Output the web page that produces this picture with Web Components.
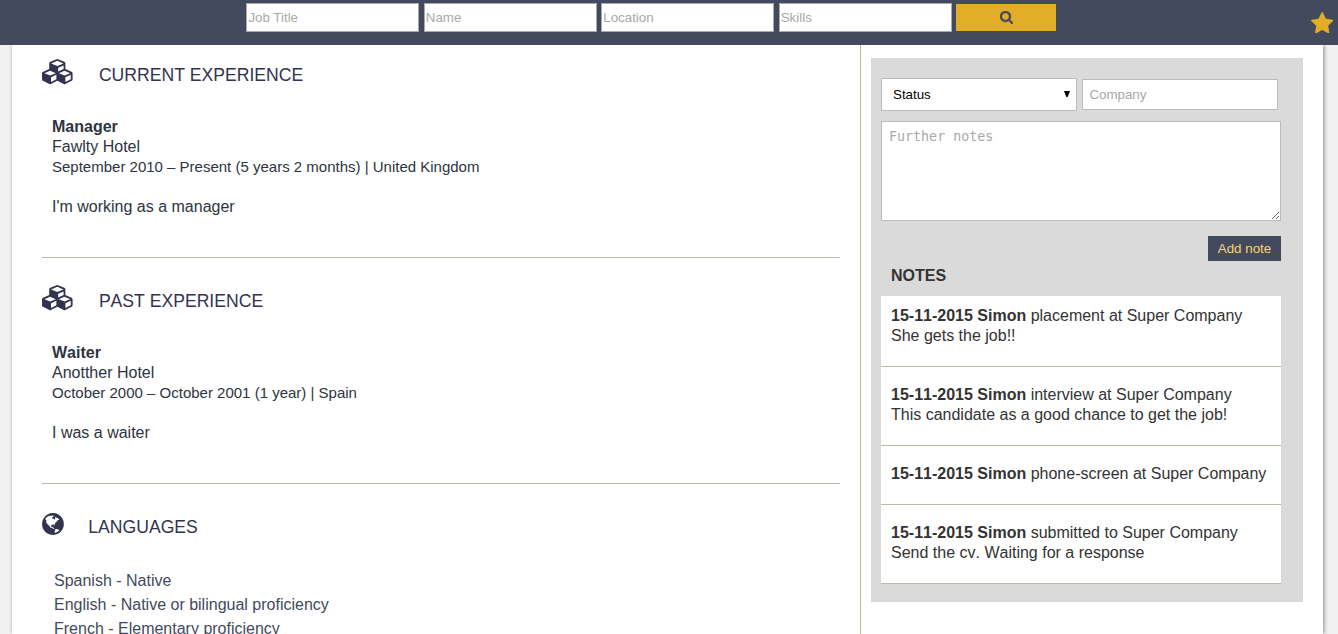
<!DOCTYPE html>
<html lang="en">
<head>
<meta charset="utf-8">
<title>Candidate profile</title>
<style>
html, body { margin: 0; height: 100%; overflow: hidden; }
body { background: #f1f1f1; font: 16px/20px "Liberation Sans", Arial, sans-serif; font-kerning: none; color: #333; }
</style>
</head>
<body>
<candidate-page></candidate-page>
<script>
const ICONS = {
  search: ['64 128 1664 1664', 'M1216 832q0-185-131.5-316.5t-316.5-131.5-316.5 131.5-131.5 316.5 131.5 316.5 316.5 131.5 316.5-131.5 131.5-316.5zm512 832q0 52-38 90t-90 38q-54 0-90-38l-343-342q-179 124-399 124-143 0-273.5-55.5t-225-150-150-225-55.5-273.5 55.5-273.5 150-225 225-150 273.5-55.5 273.5 55.5 225 150 150 225 55.5 273.5q0 220-124 399l343 343q37 37 37 90z'],
  star: ['64 32 1664 1587', 'M1728 647q0 22-26 48l-363 354 86 500q1 7 1 20 0 21-10.5 35.5t-30.5 14.5q-19 0-40-12l-449-236-449 236q-22 12-40 12-21 0-31.5-14.5t-10.5-35.5q0-6 2-20l86-500-364-354q-25-27-25-48 0-37 56-46l502-73 225-455q19-41 49-41t49 41l225 455 502 73q56 9 56 46z'],
  globe: ['128 128 1536 1536', 'M896 128q209 0 385.5 103t279.5 279.5 103 385.5-103 385.5-279.5 279.5-385.5 103-385.5-103-279.5-279.5-103-385.5 103-385.5 279.5-279.5 385.5-103zm274 521q-2 1-9.5 9.5t-13.5 9.5q2 0 4.5-5t5-11 3.5-7q6-7 22-15 14-6 52-12 34-8 51 11-2-2 9.5-13t14.5-12q3-2 15-4.5t15-7.5l2-22q-12 1-17.5-7t-6.5-21q0 2-6 8 0-7-4.5-8t-11.5 1-9 1q-10-3-15-7.5t-8-16.5-4-15q-2-5-9.5-11t-9.5-10q-1-2-2.5-5.5t-3-6.5-4-5.5-5.5-2.5-7 5-7.5 10-4.5 5q-3-2-6-1.5t-4.5 1-4.5 3-5 3.5q-3 2-8.5 3t-8.5 2q15-5-1-11-10-4-16-3 9-4 7.5-12t-8.5-14h5q-1-4-8.5-8.5t-17.5-8.5-13-6q-8-5-34-9.5t-33-.5q-5 6-4.5 10.5t4 14 3.5 12.5q1 6-5.5 13t-6.5 12q0 7 14 15.5t10 21.5q-3 8-16 16t-16 12q-5 8-1.5 18.5t10.5 16.5q2 2 1.5 4t-3.5 4.5-5.5 4-6.5 3.5l-3 2q-11 5-20.5-6t-13.5-26q-7-25-16-30-23-8-29 1-5-13-41-26-25-9-58-4 6-1 0-15-7-15-19-12 3-6 4-17.5t1-13.5q3-13 12-23 1-1 7-8.5t9.5-13.5.5-6q35 4 50-11 5-5 11.5-17t10.5-17q9-6 14-5.5t14.5 5.5 14.5 5q14 1 15.5-11t-7.5-20q12 1 3-17-4-7-8-9-12-4-27 5-8 4 2 8-1-1-9.5 10.5t-16.5 17.5-16-5q-1-1-5.5-13.5t-9.5-13.5q-8 0-16 15 3-8-11-15t-24-8q19-12-8-27-7-4-20.5-5t-19.5 4q-5 7-5.5 11.5t5 8 10.5 5.5 11.5 4 8.5 3q14 10 8 14-2 1-8.5 3.5t-11.5 4.5-6 4q-3 4 0 14t-2 14q-5-5-9-17.5t-7-16.5q7 9-25 6l-10-1q-4 0-16 2t-20.5 1-13.5-8q-4-8 0-20 1-4 4-2-4-3-11-9.5t-10-8.5q-46 15-94 41 6 1 12-1 5-2 13-6.5t10-5.5q34-14 42-7l5-5q14 16 20 25-7-4-30-1-20 6-22 12 7 12 5 18-4-3-11.5-10t-14.5-11-15-5q-16 0-22 1-146 80-235 222 7 7 12 8 4 1 5 9t2.5 11 11.5-3q9 8 3 19 1-1 44 27 19 17 21 21 3 11-10 18-1-2-9-9t-9-4q-3 5 .5 18.5t10.5 12.5q-7 0-9.5 16t-2.5 35.5-1 23.5l2 1q-3 12 5.5 34.5t21.5 19.5q-13 3 20 43 6 8 8 9 3 2 12 7.5t15 10 10 10.5q4 5 10 22.5t14 23.5q-2 6 9.5 20t10.5 23q-1 0-2.5 1t-2.5 1q3 7 15.5 14t15.5 13q1 3 2 10t3 11 8 2q2-20-24-62-15-25-17-29-3-5-5.5-15.5t-4.5-14.5q2 0 6 1.5t8.5 3.5 7.5 4 2 3q-3 7 2 17.5t12 18.5 17 19 12 13q6 6 14 19.5t0 13.5q9 0 20 10.5t17 19.5q5 8 8 26t5 24q2 7 8.5 13.5t12.5 9.5l16 8 13 7q5 2 18.5 10.5t21.5 11.5q10 4 16 4t14.5-2.5 13.5-3.5q15-2 29 15t21 21q36 19 55 11-2 1 .5 7.5t8 15.5 9 14.5 5.5 8.5q5 6 18 15t18 15q6-4 7-9-3 8 7 20t18 10q14-3 14-32-31 15-49-18 0-1-2.5-5.5t-4-8.5-2.5-8.5 0-7.5 5-3q9 0 10-3.5t-2-12.5-4-13q-1-8-11-20t-12-15q-5 9-16 8t-16-9q0 1-1.5 5.5t-1.5 6.5q-13 0-15-1 1-3 2.5-17.5t3.5-22.5q1-4 5.5-12t7.5-14.5 4-12.5-4.5-9.5-17.5-2.5q-19 1-26 20-1 3-3 10.5t-5 11.5-9 7q-7 3-24 2t-24-5q-13-8-22.5-29t-9.5-37q0-10 2.5-26.5t3-25-5.5-24.5q3-2 9-9.5t10-10.5q2-1 4.5-1.5t4.5 0 4-1.5 3-6q-1-1-4-3-3-3-4-3 7 3 28.5-1.5t27.5 1.5q15 11 22-2 0-1-2.5-9.5t-.5-13.5q5 27 29 9 3 3 15.5 5t17.5 5q3 2 7 5.5t5.5 4.5 5-.5 8.5-6.5q10 14 12 24 11 40 19 44 7 3 11 2t4.5-9.5 0-14-1.5-12.5l-1-8v-18l-1-8q-15-3-18.5-12t1.5-18.5 15-18.5q1-1 8-3.5t15.5-6.5 12.5-8q21-19 15-35 7 0 11-9-1 0-5-3t-7.5-5-4.5-2q9-5 2-16 5-3 7.5-11t7.5-10q9 12 21 2 8-8 1-16 5-7 20.5-10.5t18.5-9.5q7 2 8-2t1-12 3-12q4-5 15-9t13-5l17-11q3-4 0-4 18 2 31-11 10-11-6-20 3-6-3-9.5t-15-5.5q3-1 11.5-.5t10.5-1.5q15-10-7-16-17-5-43 12zm-163 877q206-36 351-189-3-3-12.5-4.5t-12.5-3.5q-18-7-24-8 1-7-2.5-13t-8-9-12.5-8-11-7q-2-2-7-6t-7-5.5-7.5-4.5-8.5-2-10 1l-3 1q-3 1-5.5 2.5t-5.5 3-4 3 0 2.5q-21-17-36-22-5-1-11-5.5t-10.5-7-10-1.5-11.5 7q-5 5-6 15t-2 13q-7-5 0-17.5t2-18.5q-3-6-10.5-4.5t-12 4.5-11.5 8.5-9 6.5-8.5 5.5-8.5 7.5q-3 4-6 12t-5 11q-2-4-11.5-6.5t-9.5-5.5q2 10 4 35t5 38q7 31-12 48-27 25-29 40-4 22 12 26 0 7-8 20.5t-7 21.5q0 6 2 16z'],
  cubes: ['0 0 2176 1792', 'M640 1632l384-192v-314l-384 164v342zm-64-454l404-173-404-173-404 173zm1088 454l384-192v-314l-384 164v342zm-64-454l404-173-404-173-404 173zm-448-293l384-165v-266l-384 164v267zm-64-379l441-189-441-189-441 189zm1088 518v416q0 36-19 67t-52 47l-448 224q-25 14-57 14t-57-14l-448-224q-4-2-7-4-2 2-7 4l-448 224q-25 14-57 14t-57-14l-448-224q-33-16-52-47t-19-67v-416q0-38 21.5-70t56.5-48l434-186v-400q0-38 21.5-70t56.5-48l448-192q23-10 50-10t50 10l448 192q35 16 56.5 48t21.5 70v400l434 186q36 16 57 48t21 70z']
};

function define(name, render) {
  customElements.define(name, class extends HTMLElement {
    connectedCallback() {
      if (this.shadowRoot) return;
      const tpl = document.createElement('template');
      tpl.innerHTML = render(this);
      this.attachShadow({ mode: 'open' }).appendChild(tpl.content.cloneNode(true));
    }
  });
}

define('fa-icon', el => {
  const [box, d] = ICONS[el.getAttribute('name')];
  return `<style>:host{display:block;flex:none}svg{display:block;width:100%;height:100%;fill:currentColor}</style>
  <svg viewBox="${box}" aria-hidden="true"><path d="${d}"/></svg>`;
});

define('search-bar', () => `
<style>
:host{display:flex;box-sizing:border-box;height:45px;background:#434a5d;padding:3px 5px 0 246.4px;gap:4.45px;align-items:flex-start}
input{box-sizing:border-box;width:173px;height:29px;margin:0;padding:1px;border:1px solid #a9a9a9;border-radius:0;background:#fff;font:13.333px "Liberation Sans",sans-serif;flex:none}
input::placeholder{color:#a9a9a9}
button{margin:1px 0 0;padding:0;border:0;width:100px;height:27px;background:#e3ad28;color:#434a5d;display:flex;align-items:center;justify-content:center}
button fa-icon{width:13px;height:13px}
button fa-icon{stroke:currentColor;stroke-width:40px}
.star{width:22.4px;height:21.4px;margin:9px 0 0 auto;color:#e3ad28}
</style>
<input placeholder="Job Title"><input placeholder="Name"><input placeholder="Location"><input placeholder="Skills">
<button aria-label="Search"><fa-icon name="search"></fa-icon></button>
<fa-icon class="star" name="star"></fa-icon>`);

define('profile-section', el => `
<style>
:host{display:block;margin:0 20px 0 30px;border-bottom:1px solid #babaa8;height:212px;padding-top:13px}
:host([first]){padding-top:0}
:host([last]){border:0}
header{display:flex;color:#333350;gap:24.4px;height:60px;align-items:flex-start}
h2{margin:20px 0 0;font:17.6px/20px "Liberation Sans",sans-serif;font-kerning:none}
fa-icon{width:30.6px;height:25.2px;margin:14.4px 1.9px 0 0}
fa-icon[name=globe]{width:21.9px;height:21.9px;margin:16px 0 0}
.body{padding:12px 10px 0}
</style>
<header><fa-icon name="${el.getAttribute('icon')}"></fa-icon><h2>${el.getAttribute('heading')}</h2></header>
<div class="body"><slot></slot></div>`);

define('job-entry', el => `
<style>
:host{display:block;color:#2e3440}
b,span,small{display:block}
small{font-size:15px;line-height:20px}
p{margin:20px 0 0}
</style>
<b>${el.getAttribute('role')}</b><span>${el.getAttribute('employer')}</span>
<small><slot name="period"></slot></small><p><slot></slot></p>`);

define('language-list', () => `
<style>:host{display:block;color:#434a5d;line-height:24px;padding:0 2px}</style><slot></slot>`);

define('note-form', () => `
<style>
:host{display:flex;flex-direction:column;width:400px}
.row{display:flex;gap:5px;align-items:center;height:33px}
.select,input,textarea{box-sizing:border-box;border:1px solid #bbb;border-radius:0;background:#fff;margin:0}
.select{width:196px;height:33px;display:flex;align-items:center;justify-content:space-between;padding:0 6px 0 11px;color:#000;font-size:13.333px}
.select svg{width:6px;height:6px;display:block;margin-top:-1px}
input{width:196px;height:31px;padding:0 6.4px;font:13.333px "Liberation Sans",sans-serif}
textarea{display:block;width:400px;height:100px;margin-top:10px;padding:7px;font:13.333px "DejaVu Sans Mono",monospace}
::placeholder{color:#a9a9a9}
button{align-self:flex-end;margin:15px 0 0;border:0;padding:0;width:73px;height:25px;background:#434a5d;color:#f8d568;font:13.333px "Liberation Sans",sans-serif}
</style>
<div class="row"><div class="select" role="combobox"><span>Status</span><svg viewBox="0 0 6 6"><path d="M0 0H6L3.6 6H2.4Z"/></svg></div><input placeholder="Company"></div>
<textarea placeholder="Further notes"></textarea>
<button>Add note</button>`);

define('note-item', el => `
<style>
:host{display:block;background:#fff;border-bottom:1px solid #babaa8;padding:18px 10px 20px}
:host(:first-of-type){padding-top:10px}
</style>
<b>${el.getAttribute('stamp')}</b> <slot></slot>`);

define('notes-panel', () => `
<style>
:host{display:block;box-sizing:border-box;width:432px;height:544px;background:#dadada;padding:20px 10px;color:#333}
h3{margin:0;padding:5px 10px 10px;font-size:16px;line-height:20px}
.list{width:400px}
</style>
<note-form></note-form><h3>NOTES</h3><div class="list"><slot></slot></div>`);

define('candidate-page', () => `
<style>
:host{display:flex;flex-direction:column;height:634px;overflow:hidden}
search-bar{position:relative;z-index:1;flex:none}
main{display:flex;width:1311px;margin-left:12px;flex:1;min-height:0;background:#fff;box-shadow:1px 0 4px #888}
.cv{width:848px;flex:none;border-right:1px solid #babaa0}
aside{padding:13px 0 0 10px}
</style>
<search-bar></search-bar>
<main>
<div class="cv">
<profile-section first icon="cubes" heading="CURRENT EXPERIENCE"><job-entry role="Manager" employer="Fawlty Hotel"><span slot="period">September 2010 – Present (5 years 2 months) | United Kingdom</span>I'm working as a manager</job-entry></profile-section>
<profile-section icon="cubes" heading="PAST EXPERIENCE"><job-entry role="Waiter" employer="Anotther Hotel"><span slot="period">October 2000 – October 2001 (1 year) | Spain</span>I was a waiter</job-entry></profile-section>
<profile-section last icon="globe" heading="LANGUAGES"><language-list><div>Spanish - Native</div><div>English - Native or bilingual proficiency</div><div>French - Elementary proficiency</div></language-list></profile-section>
</div>
<aside><notes-panel>
<note-item stamp="15-11-2015 Simon">placement at Super Company<br>She gets the job!!</note-item>
<note-item stamp="15-11-2015 Simon">interview at Super Company<br>This candidate as a good chance to get the job!</note-item>
<note-item stamp="15-11-2015 Simon">phone-screen at Super Company</note-item>
<note-item stamp="15-11-2015 Simon">submitted to Super Company<br>Send the cv. Waiting for a response</note-item>
</notes-panel></aside>
</main>`);
</script>
</body>
</html>
